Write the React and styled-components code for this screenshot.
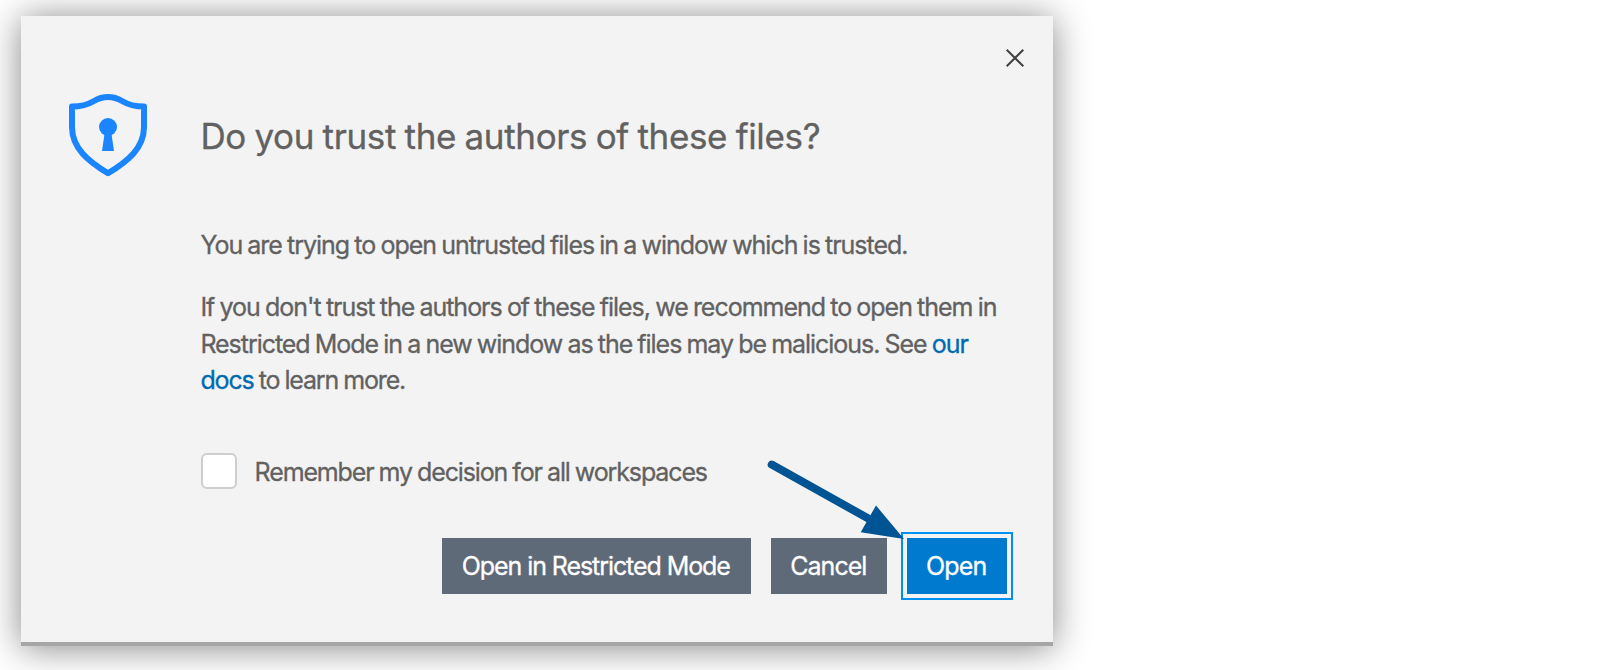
import React from "react";
import styled, { createGlobalStyle } from "styled-components";

const GlobalStyle = createGlobalStyle`
  *, *::before, *::after { box-sizing: border-box; }
  body {
    margin: 0;
    background: #fff;
    overflow: hidden;
    font-family: Inter, "Liberation Sans", sans-serif;
    color: #616161;
    -webkit-text-stroke: 0.3px currentColor;
  }
`;

const Page = styled.main`
  display: flex;
  align-items: flex-start;
  height: 670px;
  padding: 16px 0 0 21px;
  overflow: hidden;
`;

const Dialog = styled.section`
  position: relative;
  display: flex;
  flex-direction: column;
  width: 1032px;
  height: 630px;
  padding: 24px 20px 0;
  background: #f3f3f3;
  border-bottom: 4px solid #a6a6a6;
  box-shadow: 0 2px 34px rgba(0, 0, 0, 0.48);
`;

const CloseRow = styled.div`
  display: flex;
  justify-content: flex-end;
  height: 36px;
`;

const CloseButton = styled.button`
  display: grid;
  place-items: center;
  width: 36px;
  height: 36px;
  padding: 0;
  border: 0;
  background: none;
  color: #424242;
`;

const Content = styled.div`
  display: grid;
  grid-template-columns: 134px 1fr;
  column-gap: 26px;
  height: 446px;
`;

const ShieldCell = styled.div`
  padding: 16px 0 0 26px;

  svg { display: block; }
`;

const Message = styled.div`
  display: flex;
  flex-direction: column;
  padding-top: 32px;
`;

const Title = styled.h1`
  margin: 0 0 62.6px -0.6px;
  font-size: 35px;
  font-weight: 400;
  line-height: 56px;
  letter-spacing: -0.35px;
  word-spacing: -1px;
  white-space: nowrap;
`;

const Paragraph = styled.p`
  margin: 0 0 26.4px -0.6px;
  font-size: 25px;
  line-height: 36.4px;
  word-spacing: -0.8px;
`;

const Line = styled.span`
  display: block;
  white-space: nowrap;
  letter-spacing: ${({ $tracking }) => $tracking}px;
`;

const DocsLink = styled.a`
  color: #006ab1;
  text-decoration: none;
`;

const Remember = styled.label`
  display: flex;
  gap: 17.6px;
  margin-top: 28px;
  font-size: 25px;
  line-height: 38px;
  letter-spacing: -1.13px;
  word-spacing: -0.8px;
  white-space: nowrap;
`;

const Checkbox = styled.input`
  appearance: none;
  flex: none;
  width: 36px;
  height: 36px;
  margin: 0;
  background: #fff;
  border: 2px solid #cecece;
  border-radius: 6px;
`;

const Actions = styled.div`
  display: flex;
  justify-content: flex-end;
  gap: 20px;
  padding: 16px 26px 0 0;
`;

const Button = styled.button`
  width: ${({ $width }) => $width}px;
  height: 56px;
  padding: 1px 1.4px 0 0;
  border: 0;
  background: ${({ $primary }) => ($primary ? "#007acf" : "#5f6a79")};
  color: #fff;
  font: 400 25px/55px Inter, "Liberation Sans", sans-serif;
  letter-spacing: ${({ $tracking }) => $tracking}px;
  -webkit-text-stroke: 0.3px currentColor;
  white-space: nowrap;
  outline: ${({ $primary }) => ($primary ? "2px solid #0090f1" : "none")};
  outline-offset: 4px;
`;

const Pointer = styled.svg`
  position: absolute;
  left: 741px;
  top: 440px;
  pointer-events: none;
`;

function ShieldIcon() {
  return (
    <svg width="82" height="88" viewBox="67 92 82 88" fill="none">
      <path
        d="M72 106.6C82 106.6 88 104.6 94 101C99 98 103 97 108 97C113 97 117 98 122 101C128 104.6 134 106.6 144 106.6V127C144 148 128 161 108 173.2C88 161 72 148 72 127Z"
        stroke="#1a85ff"
        strokeWidth="6"
        strokeLinejoin="round"
      />
      <circle cx="108" cy="127" r="9" fill="#1a85ff" />
      <path d="M104.5 134h7L114 151h-12Z" fill="#1a85ff" />
    </svg>
  );
}

function CloseIcon() {
  return (
    <svg width="20" height="20" viewBox="0 0 20 20" stroke="#424242" strokeWidth="2">
      <path d="M1.7 1.7 18.3 18.3M18.3 1.7 1.7 18.3" />
    </svg>
  );
}

function PointerArrow() {
  return (
    <Pointer width="150" height="90" viewBox="762 456 150 90">
      <path d="M771.7 464.6 871 520" stroke="#005493" strokeWidth="8" strokeLinecap="round" />
      <path d="M876 505.5 904 539 860.7 532.2Z" fill="#005493" />
    </Pointer>
  );
}

export default function App() {
  return (
    <>
      <GlobalStyle />
      <Page>
        <Dialog role="dialog" aria-labelledby="trust-title">
          <CloseRow>
            <CloseButton aria-label="Close">
              <CloseIcon />
            </CloseButton>
          </CloseRow>
          <Content>
            <ShieldCell>
              <ShieldIcon />
            </ShieldCell>
            <Message>
              <Title id="trust-title">Do you trust the authors of these files?</Title>
              <Paragraph>
                <Line $tracking={-1.025}>
                  You are trying to open untrusted files in a window which is trusted.
                </Line>
              </Paragraph>
              <Paragraph>
                <Line $tracking={-1.02}>
                  If you don't trust the authors of these files, we recommend to open them in
                </Line>
                <Line $tracking={-1.04}>
                  Restricted Mode in a new window as the files may be malicious. See{" "}
                  <DocsLink>our</DocsLink>
                </Line>
                <Line $tracking={-1.15}>
                  <DocsLink>docs</DocsLink> to learn more.
                </Line>
              </Paragraph>
              <Remember>
                <Checkbox type="checkbox" />
                Remember my decision for all workspaces
              </Remember>
            </Message>
          </Content>
          <Actions>
            <Button $width={309} $tracking={-1.077}>Open in Restricted Mode</Button>
            <Button $width={116} $tracking={-0.986}>Cancel</Button>
            <Button $width={100} $tracking={-0.8} $primary>Open</Button>
          </Actions>
          <PointerArrow />
        </Dialog>
      </Page>
    </>
  );
}
